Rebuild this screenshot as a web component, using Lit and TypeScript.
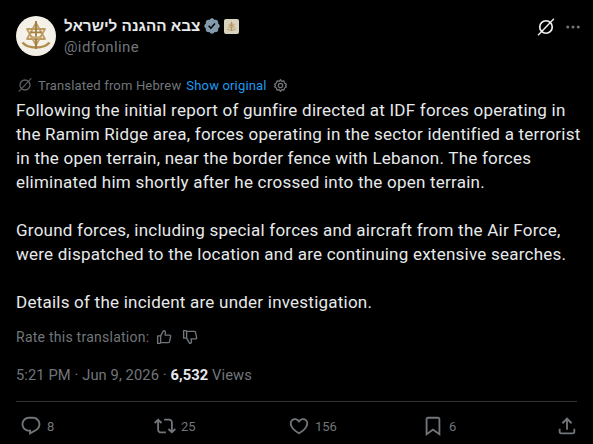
import { LitElement, html, css, svg } from "lit";
import { customElement } from "lit/decorators.js";

const emblem = svg`
  <g fill="none" stroke="#bd9c63" stroke-linejoin="round">
    <path d="M20 7 29 23H11z" stroke-width="1.800"/>
    <path d="M20 29 11 13H29z" stroke-width="1.800"/>
    <path d="M6.500 26.500c3 3.500 8 5 13.500 5s10.500-1.500 13.500-5" stroke-width="2.600" stroke="#b18e50"/>
  </g>
  <path d="M19.100 5h1.800v28h-1.800z" fill="#9f7c3d"/>
  <path d="M14.500 15.500h11v1.800h-11z" fill="#a5833f"/>
  <path d="M15 19c1.500 1 3 1.500 5 1.500S23.500 20 25 19l-1 3.500H16z" fill="#c9ab74"/>
`;

const ICONS = {
  reply: "M1.751 10c0-4.420 3.584-8 8.005-8h4.366c4.490 0 8.129 3.640 8.129 8.130 0 2.960-1.607 5.680-4.196 7.110l-8.054 4.460v-3.690h-.067c-4.490.1-8.183-3.510-8.183-8.010zm8.005-6c-3.317 0-6.005 2.690-6.005 6 0 3.370 2.770 6.080 6.138 6.010l.351-.01h1.761v2.300l5.087-2.810c1.951-1.080 3.163-3.130 3.163-5.360 0-3.390-2.744-6.130-6.129-6.130H9.756z",
  retweet: "M4.500 3.880l4.432 4.140-1.364 1.460L5.500 7.550V16c0 1.100.896 2 2 2H13v2H7.500c-2.209 0-4-1.790-4-4V7.550L1.432 9.480.068 8.020 4.500 3.880zM16.500 6H11V4h5.500c2.209 0 4 1.790 4 4v8.450l2.068-1.930 1.364 1.460-4.432 4.140-4.432-4.140 1.364-1.460 2.068 1.930V8c0-1.100-.896-2-2-2z",
  like: "M16.697 5.500c-1.222-.06-2.679.51-3.890 2.160l-.805 1.090-.806-1.090C9.984 6.010 8.526 5.440 7.304 5.500c-1.243.07-2.349.78-2.910 1.910-.552 1.120-.633 2.780.479 4.820 1.074 1.970 3.257 4.270 7.129 6.610 3.870-2.340 6.052-4.640 7.126-6.610 1.111-2.040 1.030-3.700.477-4.820-.561-1.130-1.666-1.840-2.908-1.910zm4.187 7.690c-1.351 2.480-4.001 5.120-8.379 7.670l-.503.3-.504-.3c-4.379-2.550-7.029-5.190-8.382-7.670-1.360-2.500-1.410-4.860-.514-6.670.887-1.790 2.647-2.910 4.601-3.010 1.651-.09 3.368.56 4.798 2.010 1.429-1.450 3.146-2.100 4.796-2.010 1.954.1 3.714 1.220 4.601 3.010.896 1.810.846 4.170-.514 6.670z",
  bookmark: "M4 4.500C4 3.120 5.119 2 6.500 2h11C18.881 2 20 3.120 20 4.500v18.440l-8-5.710-8 5.710V4.500zM6.500 4c-.276 0-.5.220-.5.500v14.560l6-4.290 6 4.290V4.500c0-.28-.224-.5-.5-.5h-11z",
  share: "M12 2.590l5.700 5.700-1.410 1.420L13 6.410V16h-2V6.410l-3.300 3.300-1.410-1.420L12 2.590zM21 15l-.02 3.510c0 1.380-1.120 2.490-2.500 2.490H5.500C4.110 21 3 19.880 3 18.500V15h2v3.500c0 .28.220.5.5.5h12.980c.28 0 .5-.22.5-.5L19 15h2z",
  verified: "M22.250 12c0-1.430-.88-2.670-2.190-3.340.46-1.390.2-2.900-.81-3.910s-2.520-1.270-3.910-.81c-.66-1.310-1.910-2.190-3.340-2.190s-2.670.88-3.330 2.190c-1.400-.46-2.910-.2-3.920.81s-1.260 2.520-.8 3.910c-1.310.67-2.200 1.910-2.200 3.340s.89 2.670 2.200 3.340c-.46 1.390-.21 2.900.8 3.910s2.520 1.260 3.910.81c.67 1.310 1.910 2.190 3.340 2.190s2.680-.88 3.340-2.190c1.390.45 2.900.2 3.910-.81s1.270-2.520.81-3.910c1.310-.67 2.190-1.910 2.190-3.340zm-11.710 4.200L6.800 12.460l1.410-1.420 2.260 2.260 4.800-5.230 1.470 1.360-6.200 6.770z",
};

const slashCircle = svg`<ellipse cx="12" cy="12" rx="7.500" ry="7.500" fill="none" stroke="currentColor" stroke-width="2" transform="rotate(-45 12 12)"/><path d="M2.500 22 21.500 2" fill="none" stroke="currentColor" stroke-width="1.600"/>`;
const thumb = svg`<path d="M7.500 10.500 11.500 3.500c1.500 0 2.500 1 2.500 2.500l-.6 3.500H19.500c.9 0 1.500.7 1.300 1.600l-1.500 7.400c-.2.700-.7 1-1.300 1H7.500zM7.500 10.500H3.500v10h4" fill="none" stroke="currentColor" stroke-width="1.800" stroke-linejoin="round"/>`;

@customElement("app-root")
export class AppRoot extends LitElement {
  static styles = css`
    :host {
      display: block;
      width: 593px;
      height: 444px;
      overflow: hidden;
      background: #000;
      color: #e7e9ea;
      font-family: Roboto, "Liberation Sans", sans-serif;
      box-sizing: border-box;
      padding: 16px 16px 0;
    }
    svg { display: block; fill: currentColor; flex: none; }
    .header { display: flex; align-items: flex-start; height: 40px; }
    .avatar {
      width: 40px; height: 40px; border-radius: 50%;
      background: radial-gradient(circle at 50% 45%, #f8f6f0 0%, #f2eee5 72%, #d9d4c8 100%);
      margin-right: 8px; flex: none;
    }
    .who { flex: 1; display: flex; flex-direction: column; }
    .nameRow { display: flex; align-items: center; height: 20px; }
    .name { font: 700 15.300px/20px "Liberation Sans", sans-serif; color: #e7e9ea; }
    .verified { color: #829aab; margin-left: 3px; }
    .flag { width: 15px; height: 15px; background: #d9d2bf; border-radius: 2px; margin-left: 3px; display: flex; align-items: center; justify-content: center; }
    .handle { font-size: 15px; line-height: 22px; letter-spacing: .4px; color: #71767b; }
    .tools { display: flex; align-items: center; gap: 8px; color: #eff3f4; margin-top: 1px; margin-right: -5px; }
    .more { color: #71767b; }
    .translated { display: flex; align-items: center; height: 20px; margin-top: 19px; font-size: 13px; letter-spacing: .17px; color: #71767b; }
    .translated .slash { margin: 0 5px 0 1px; color: #5b6064; }
    .link { color: #1d9bf0; margin-left: 5px; }
    .gear { margin-left: 6px; color: #71767b; }
    .body { margin: 3px 0 0; font-size: 17px; line-height: 24px; letter-spacing: .23px; color: #e7e9ea; white-space: pre-line; width: 565px; }
    .rate { display: flex; align-items: center; height: 20px; margin-top: 13px; font-size: 14px; letter-spacing: .25px; color: #71767b; }
    .rate svg { margin-left: 6px; }
    .rate .down { margin-left: 8px; transform: rotate(180deg) scaleX(-1); }
    .meta { height: 20px; margin-top: 18px; font-size: 14.700px; line-height: 20px; letter-spacing: .1px; color: #71767b; }
    .meta b { color: #e7e9ea; font-weight: 700; }
    .actions { border-top: 1px solid #2f3336; margin-top: 16px; width: 561px; box-sizing: border-box; display: grid; grid-template-columns: repeat(4, 134px) 22px; padding: 13px 0 0 4px; }
    .act { display: flex; align-items: center; gap: 5px; color: #71767b; font-size: 13px; height: 22px; }
  `;

  private icon(k: keyof typeof ICONS, s: number, cls = "") {
    return html`<svg class=${cls} width=${s} height=${s} viewBox="0 0 24 24"><path d=${ICONS[k]} /></svg>`;
  }

  render() {
    const acts: [keyof typeof ICONS, string][] = [["reply", "8"], ["retweet", "25"], ["like", "156"], ["bookmark", "6"]];
    return html`
      <div class="header">
        <div class="avatar"><svg width="40" height="40" viewBox="0 0 40 40">${emblem}</svg></div>
        <div class="who">
          <div class="nameRow">
            <span class="name" dir="rtl">צבא ההגנה לישראל</span>
            ${this.icon("verified", 18, "verified")}
            <span class="flag"><svg width="13" height="13" viewBox="0 0 40 40">${emblem}</svg></span>
          </div>
          <div class="handle">@idfonline</div>
        </div>
        <div class="tools">
          <svg width="20" height="20" viewBox="0 0 24 24">${slashCircle}</svg>
          <svg class="more" width="18" height="18" viewBox="0 0 24 24"><circle cx="5" cy="12" r="2"/><circle cx="12" cy="12" r="2"/><circle cx="19" cy="12" r="2"/></svg>
        </div>
      </div>
      <div class="translated">
        <svg class="slash" width="16" height="16" viewBox="0 0 24 24">${slashCircle}</svg>
        <span>Translated from Hebrew</span>
        <span class="link">Show original</span>
        <svg class="gear" width="15" height="15" viewBox="0 0 24 24"><circle cx="12" cy="12" r="3.500" fill="none" stroke="currentColor" stroke-width="2"/><path d="M12 2.500l2 3 3.500-1 1 3.500 3 2-1.500 2 1.500 2-3 2-1 3.500-3.500-1-2 3-2-3-3.500 1-1-3.500-3-2 1.500-2-1.500-2 3-2 1-3.500 3.500 1z" fill="none" stroke="currentColor" stroke-width="2" stroke-linejoin="round"/></svg>
      </div>
      <div class="body">Following the initial report of gunfire directed at IDF forces operating in the Ramim Ridge area, forces operating in the sector identified a terrorist in the open terrain, near the border fence with Lebanon. The forces eliminated him shortly after he crossed into the open terrain.

Ground forces, including special forces and aircraft from the Air Force, were dispatched to the location and are continuing extensive searches.

Details of the incident are under investigation.</div>
      <div class="rate">
        <span>Rate this translation:</span>
        <svg width="18" height="18" viewBox="0 0 24 24">${thumb}</svg>
        <svg class="down" width="18" height="18" viewBox="0 0 24 24">${thumb}</svg>
      </div>
      <div class="meta">5:21 PM · Jun 9, 2026 · <b>6,532</b> Views</div>
      <div class="actions">
        ${acts.map(([k, n]) => html`<div class="act">${this.icon(k, 22)}<span>${n}</span></div>`)}
        <div class="act">${this.icon("share", 22)}</div>
      </div>
    `;
  }
}
